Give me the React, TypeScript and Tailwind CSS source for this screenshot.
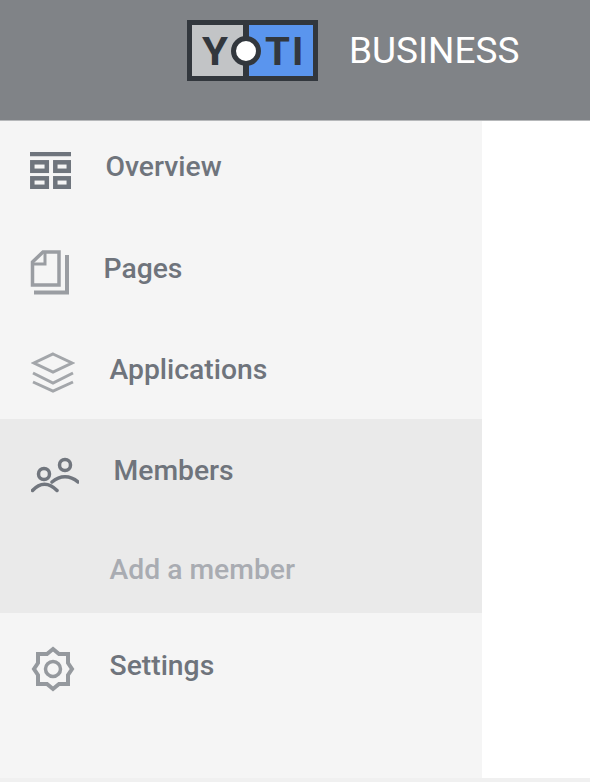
const Logo = () => (
  <svg width="131" height="61" viewBox="0 0 131 61" className="shrink-0">
    <rect x="2.5" y="2.5" width="126" height="56" fill="#c2c4c6" stroke="#32373d" strokeWidth="5" />
    <rect x="60" y="5" width="66" height="51" fill="#5a95ee" />
    <rect x="56" y="5" width="6" height="51" fill="#32373d" />
    <text x="15" y="45" textLength="26" lengthAdjust="spacingAndGlyphs" fill="#32373d" fontSize="39" fontWeight="700" fontFamily="Roboto, sans-serif">Y</text>
    <text x="78" y="45" textLength="25" lengthAdjust="spacingAndGlyphs" fill="#32373d" fontSize="39" fontWeight="700" fontFamily="Roboto, sans-serif">T</text>
    <text x="105" y="45" fill="#32373d" fontSize="39" fontWeight="700" fontFamily="Roboto, sans-serif">I</text>
    <circle cx="59" cy="31" r="12.5" fill="#fff" stroke="#32373d" strokeWidth="5" />
  </svg>
);

const OverviewIcon = () => (
  <svg width="41" height="37" viewBox="0 0 41 37" fill="none" stroke="#6f757d" strokeWidth="4.500">
    <path d="M0 2h41" />
    <rect x="2.300" y="10.300" width="14.500" height="8.500" />
    <rect x="25.300" y="10.300" width="13.500" height="8.500" />
    <rect x="2.300" y="26.300" width="14.500" height="8.500" />
    <rect x="25.300" y="26.300" width="13.500" height="8.500" />
  </svg>
);

const PagesIcon = () => (
  <svg width="40" height="45" viewBox="0 0 40 45" fill="none" stroke="#9a9da2" strokeWidth="3.5">
    <path d="M29 2H13L2.500 12V35H29Z" />
    <path d="M2.500 14H15V2" strokeWidth="3" />
    <path d="M37 5V42.500H4" strokeWidth="4" />
  </svg>
);

const ApplicationsIcon = () => (
  <svg width="44" height="41" viewBox="0 0 44 41" fill="none" stroke="#a3a6aa" strokeWidth="3">
    <path d="M22 2L41 11L22 20L3 11Z" />
    <path d="M2 21L22 31L42 21" />
    <path d="M2 30L22 39L42 30" />
  </svg>
);

const MembersIcon = () => (
  <svg width="48" height="36" viewBox="0 0 48 36" fill="none" stroke="#71767e" strokeWidth="3.500" strokeLinecap="round">
    <circle cx="13" cy="17" r="5.500" />
    <circle cx="34" cy="8" r="5.500" />
    <path d="M1.500 33.500C9 25 18 25 26 33.500" />
    <path d="M21 25C29 18 39 18 47 25" />
  </svg>
);

const SettingsIcon = () => (
  <svg width="44" height="46" viewBox="0 0 44 46" fill="none" stroke="#95999e" strokeWidth="4">
    <path d="M22 3L28 8H37V17L41 23L37 29V38H28L22 43L16 38H7V29L3 23L7 17V8H16Z" />
    <circle cx="22" cy="23" r="7.500" strokeWidth="3.500" />
  </svg>
);

export default function App() {
  return (
    <div className="flex h-[782px] w-[590px] flex-col overflow-hidden bg-white font-['Roboto',sans-serif]">
      <header className="flex h-[121px] shrink-0 items-center border-b border-[#b6b8ba] bg-[#808387] pb-[19px] pl-[187px]">
        <Logo />
        <span className="ml-[31px] text-[37px] leading-none text-white">BUSINESS</span>
      </header>

      <div className="flex h-[657px] shrink-0">
        <nav className="w-[482px] bg-[#f5f5f5] text-[28.300px] leading-[28px] font-medium text-[#6f747c]">
          <div className="flex h-[101px] pl-[30px] pt-[31px]">
            <OverviewIcon />
            <span className="ml-[34.500px] mt-[1px]">Overview</span>
          </div>
          <div className="flex h-[101px] pl-[30px] pt-[28px]">
            <PagesIcon />
            <span className="ml-[33.500px] mt-[5px]">Pages</span>
          </div>
          <div className="flex h-[96px] pl-[31px] pt-[29px]">
            <ApplicationsIcon />
            <span className="ml-[34.500px] mt-[4px]">Applications</span>
          </div>
          <div className="bg-[#eaeaea]">
            <div className="flex h-[99px] pl-[31px] pt-[38px]">
              <MembersIcon />
              <span className="ml-[34.500px]">Members</span>
            </div>
            <div className="flex h-[95px] pl-[109.500px] pt-[38px] text-[#a9acb2]">Add a member</div>
          </div>
          <div className="flex pl-[31px] pt-[33px]">
            <SettingsIcon />
            <span className="ml-[34.500px] mt-[6px]">Settings</span>
          </div>
        </nav>
        <main className="flex-1 bg-white" />
      </div>

      <div className="flex-1 bg-[#f0f0f0]" />
    </div>
  );
}
